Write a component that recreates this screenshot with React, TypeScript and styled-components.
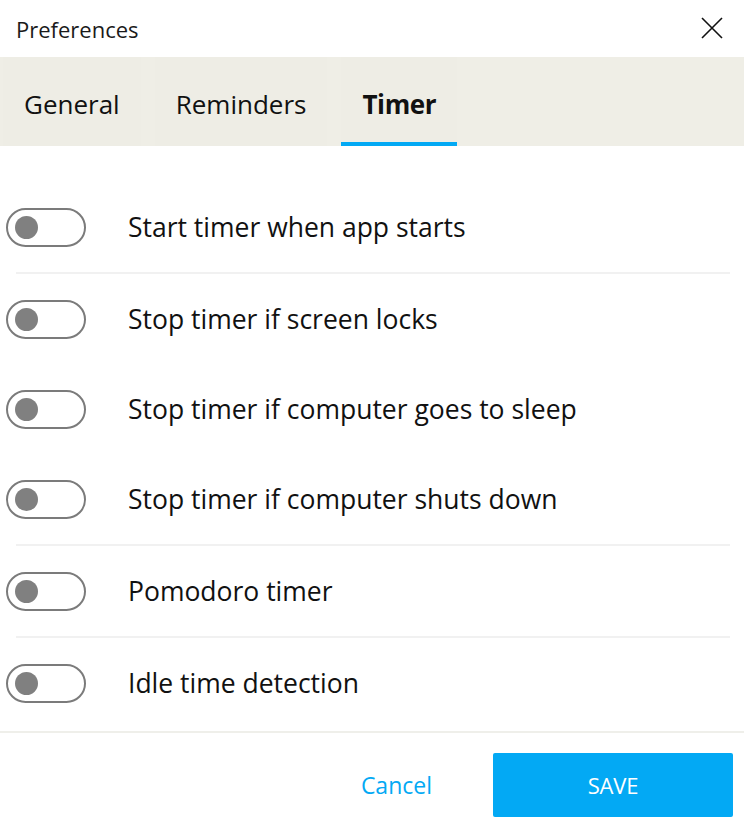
import React, { useState } from 'react';
import styled, { createGlobalStyle } from 'styled-components';

const GlobalStyle = createGlobalStyle`
  html, body {
    margin: 0;
    padding: 0;
    background: #ffffff;
  }
  body {
    font-family: "Open Sans", "Noto Sans", "Liberation Sans", sans-serif;
    color: #111111;
  }
  * {
    box-sizing: border-box;
  }
`;

const Dialog = styled.div`
  width: 744px;
  height: 832px;
  display: flex;
  flex-direction: column;
  background: #ffffff;
`;

const Header = styled.div`
  height: 57px;
  display: flex;
  align-items: center;
  justify-content: space-between;
  padding: 0 21px 0 16px;
`;

const Title = styled.div`
  font-size: 22px;
  color: #1a1a1a;
`;

const CloseButton = styled.button`
  width: 22px;
  height: 22px;
  padding: 0;
  border: 0;
  background: none;
  display: grid;
  place-items: center;
  cursor: pointer;
  margin-top: -2px;
`;

const TabBar = styled.div`
  height: 89px;
  display: flex;
  gap: 14px;
  padding-left: 3px;
  background: #efeee6;
`;

const Tab = styled.button<{ active: boolean }>`
  display: flex;
  align-items: center;
  padding: 8px 21px 0;
  border: 0;
  border-bottom: 4px solid ${({ active }) => (active ? '#03a9f4' : 'transparent')};
  background: #eeede5;
  font-family: inherit;
  font-size: 26px;
  font-weight: ${({ active }) => (active ? 700 : 400)};
  color: #111111;
  letter-spacing: ${({ active }) => (active ? '-0.4px' : '0')};
  cursor: pointer;
`;

const Content = styled.div`
  flex: 1;
  padding-top: 36px;
`;

const Row = styled.div`
  height: 90px;
  display: flex;
  align-items: center;
  gap: 42px;
  padding-left: 6px;
`;

const Toggle = styled.button<{ on: boolean }>`
  width: 80px;
  height: 39px;
  padding: 0 7px;
  border: 2px solid #7b7b7b;
  border-radius: 20px;
  background: ${({ on }) => (on ? '#03a9f4' : '#ffffff')};
  display: flex;
  align-items: center;
  justify-content: ${({ on }) => (on ? 'flex-end' : 'flex-start')};
  cursor: pointer;
`;

const Knob = styled.span<{ on: boolean }>`
  width: 23px;
  height: 23px;
  border-radius: 50%;
  background: ${({ on }) => (on ? '#ffffff' : '#808080')};
`;

const Label = styled.div`
  font-size: 26.5px;
  color: #111111;
`;

const Divider = styled.div`
  height: 2px;
  margin: 0 14px 0 16px;
  background: #f1f1f1;
`;

const Footer = styled.div`
  height: 101px;
  display: flex;
  align-items: flex-start;
  justify-content: flex-end;
  padding: 20px 11px 0 0;
  border-top: 2px solid #efefea;
`;

const TextButton = styled.button`
  height: 64px;
  padding: 0 30px;
  margin-right: 31px;
  border: 0;
  background: none;
  font-family: inherit;
  font-size: 23px;
  color: #03a9f4;
  cursor: pointer;
`;

const PrimaryButton = styled.button`
  width: 240px;
  height: 64px;
  border: 0;
  border-radius: 2px;
  background: #03a9f4;
  font-family: inherit;
  font-size: 22px;
  color: #ffffff;
  letter-spacing: -0.2px;
  cursor: pointer;
`;

const tabs = ['General', 'Reminders', 'Timer'];

const settings = [
  { label: 'Start timer when app starts', divider: true },
  { label: 'Stop timer if screen locks', divider: false },
  { label: 'Stop timer if computer goes to sleep', divider: false },
  { label: 'Stop timer if computer shuts down', divider: true },
  { label: 'Pomodoro timer', divider: true },
  { label: 'Idle time detection', divider: false },
];

export default function App() {
  const [activeTab, setActiveTab] = useState('Timer');
  const [values, setValues] = useState<boolean[]>(settings.map(() => false));

  const flip = (index: number) =>
    setValues(prev => prev.map((v, i) => (i === index ? !v : v)));

  return (
    <>
      <GlobalStyle />
      <Dialog>
        <Header>
          <Title>Preferences</Title>
          <CloseButton aria-label="Close">
            <svg width="22" height="22" viewBox="0 0 22 22">
              <path d="M1 1 L21 21 M21 1 L1 21" stroke="#111" strokeWidth="1.6" fill="none" />
            </svg>
          </CloseButton>
        </Header>

        <TabBar>
          {tabs.map(tab => (
            <Tab key={tab} active={tab === activeTab} onClick={() => setActiveTab(tab)}>
              {tab}
            </Tab>
          ))}
        </TabBar>

        <Content>
          {settings.map((item, i) => (
            <React.Fragment key={item.label}>
              <Row>
                <Toggle on={values[i]} onClick={() => flip(i)}>
                  <Knob on={values[i]} />
                </Toggle>
                <Label>{item.label}</Label>
              </Row>
              {item.divider && <Divider />}
            </React.Fragment>
          ))}
        </Content>

        <Footer>
          <TextButton>Cancel</TextButton>
          <PrimaryButton>SAVE</PrimaryButton>
        </Footer>
      </Dialog>
    </>
  );
}
